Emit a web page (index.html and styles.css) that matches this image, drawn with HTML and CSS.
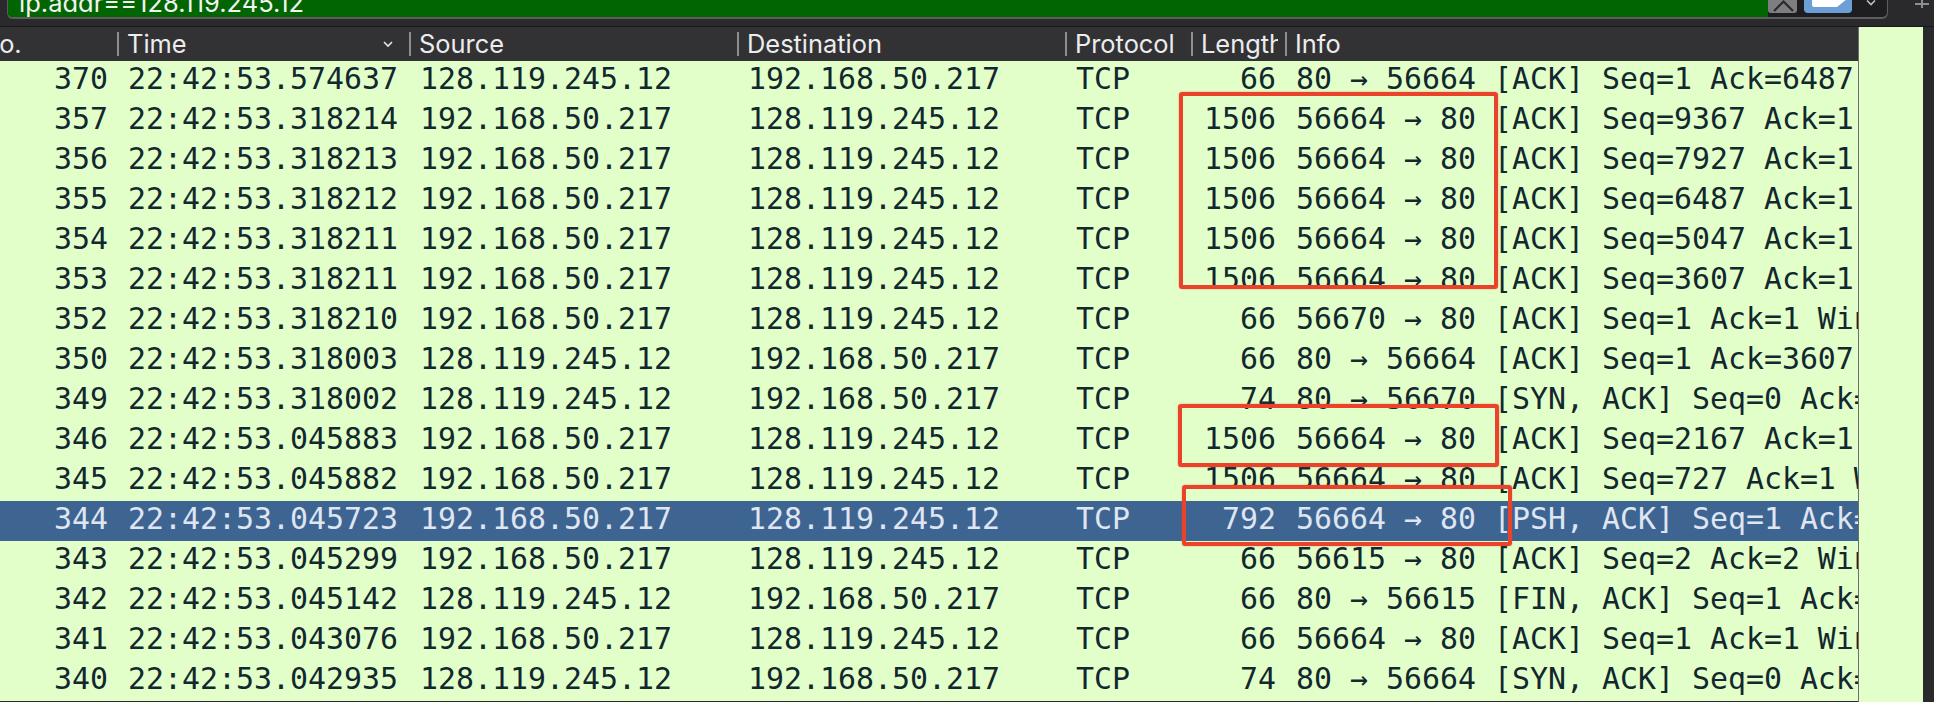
FILE: index.html
```html
<!DOCTYPE html>
<html lang="en">
<head>
<meta charset="utf-8">
<title>Wireshark packet list</title>
<link rel="stylesheet" href="styles.css">
</head>
<body>
<div class="app">
  <div class="toolbar">
    <div class="filter">
      <div class="filter-field"><span class="filter-text">ip.addr==128.119.245.12</span></div>
      <div class="btn-clear"><svg width="29" height="13" viewBox="0 0 29 13"><polyline points="6,11 15.5,1.5 25,11" fill="none" stroke="#2a2a2c" stroke-width="2.2"/></svg></div>
      <div class="btn-apply"><svg width="48" height="13" viewBox="0 0 48 13"><path d="M8 0 L8 5 Q8 7 10 7 L33 7 L43 -1 Z" fill="#ffffff"/></svg></div>
      <div class="dropdown"><svg width="10" height="7" viewBox="0 0 10 7"><polyline points="1,0.5 5,4.5 9,0.5" fill="none" stroke="#bdbdbf" stroke-width="1.6"/></svg></div>
    </div>
    <div class="plus"><svg width="14" height="9" viewBox="0 0 14 9"><path d="M7 0 V8 M0 4 H14" stroke="#8e8e90" stroke-width="2"/></svg></div>
  </div>
  <div class="main">
    <div class="packets">
      <div class="head">
        <div class="hc hc-no">No.</div>
        <div class="hc hc-time"><span>Time</span><svg width="10" height="7" viewBox="0 0 10 7"><polyline points="1,1 5,5 9,1" fill="none" stroke="#e6e6e6" stroke-width="1.6"/></svg></div>
        <div class="hc">Source</div>
        <div class="hc">Destination</div>
        <div class="hc">Protocol</div>
        <div class="hc hc-len">Length</div>
        <div class="hc">Info</div>
      </div>
      <div class="rows">
        <div class="row"><div class="c r">370</div><div class="c">22:42:53.574637</div><div class="c">128.119.245.12</div><div class="c">192.168.50.217</div><div class="c">TCP</div><div class="c r">66</div><div class="c">80 → 56664 [ACK] Seq=1 Ack=6487 Win=131072 Len=0</div></div>
        <div class="row"><div class="c r">357</div><div class="c">22:42:53.318214</div><div class="c">192.168.50.217</div><div class="c">128.119.245.12</div><div class="c">TCP</div><div class="c r">1506</div><div class="c">56664 → 80 [ACK] Seq=9367 Ack=1 Win=131712 Len=1440</div></div>
        <div class="row"><div class="c r">356</div><div class="c">22:42:53.318213</div><div class="c">192.168.50.217</div><div class="c">128.119.245.12</div><div class="c">TCP</div><div class="c r">1506</div><div class="c">56664 → 80 [ACK] Seq=7927 Ack=1 Win=131712 Len=1440</div></div>
        <div class="row"><div class="c r">355</div><div class="c">22:42:53.318212</div><div class="c">192.168.50.217</div><div class="c">128.119.245.12</div><div class="c">TCP</div><div class="c r">1506</div><div class="c">56664 → 80 [ACK] Seq=6487 Ack=1 Win=131712 Len=1440</div></div>
        <div class="row"><div class="c r">354</div><div class="c">22:42:53.318211</div><div class="c">192.168.50.217</div><div class="c">128.119.245.12</div><div class="c">TCP</div><div class="c r">1506</div><div class="c">56664 → 80 [ACK] Seq=5047 Ack=1 Win=131712 Len=1440</div></div>
        <div class="row"><div class="c r">353</div><div class="c">22:42:53.318211</div><div class="c">192.168.50.217</div><div class="c">128.119.245.12</div><div class="c">TCP</div><div class="c r">1506</div><div class="c">56664 → 80 [ACK] Seq=3607 Ack=1 Win=131712 Len=1440</div></div>
        <div class="row"><div class="c r">352</div><div class="c">22:42:53.318210</div><div class="c">192.168.50.217</div><div class="c">128.119.245.12</div><div class="c">TCP</div><div class="c r">66</div><div class="c">56670 → 80 [ACK] Seq=1 Ack=1 Win=131712 Len=0</div></div>
        <div class="row"><div class="c r">350</div><div class="c">22:42:53.318003</div><div class="c">128.119.245.12</div><div class="c">192.168.50.217</div><div class="c">TCP</div><div class="c r">66</div><div class="c">80 → 56664 [ACK] Seq=1 Ack=3607 Win=131072 Len=0</div></div>
        <div class="row"><div class="c r">349</div><div class="c">22:42:53.318002</div><div class="c">128.119.245.12</div><div class="c">192.168.50.217</div><div class="c">TCP</div><div class="c r">74</div><div class="c">80 → 56670 [SYN, ACK] Seq=0 Ack=1 Win=65535 Len=0</div></div>
        <div class="row"><div class="c r">346</div><div class="c">22:42:53.045883</div><div class="c">192.168.50.217</div><div class="c">128.119.245.12</div><div class="c">TCP</div><div class="c r">1506</div><div class="c">56664 → 80 [ACK] Seq=2167 Ack=1 Win=131712 Len=1440</div></div>
        <div class="row"><div class="c r">345</div><div class="c">22:42:53.045882</div><div class="c">192.168.50.217</div><div class="c">128.119.245.12</div><div class="c">TCP</div><div class="c r">1506</div><div class="c">56664 → 80 [ACK] Seq=727 Ack=1 Win=131712 Len=1440</div></div>
        <div class="row sel"><div class="c r">344</div><div class="c">22:42:53.045723</div><div class="c">192.168.50.217</div><div class="c">128.119.245.12</div><div class="c">TCP</div><div class="c r">792</div><div class="c">56664 → 80 [PSH, ACK] Seq=1 Ack=1 Win=131712 Len=726</div></div>
        <div class="row"><div class="c r">343</div><div class="c">22:42:53.045299</div><div class="c">192.168.50.217</div><div class="c">128.119.245.12</div><div class="c">TCP</div><div class="c r">66</div><div class="c">56615 → 80 [ACK] Seq=2 Ack=2 Win=131712 Len=0</div></div>
        <div class="row"><div class="c r">342</div><div class="c">22:42:53.045142</div><div class="c">128.119.245.12</div><div class="c">192.168.50.217</div><div class="c">TCP</div><div class="c r">66</div><div class="c">80 → 56615 [FIN, ACK] Seq=1 Ack=2 Win=131072 Len=0</div></div>
        <div class="row"><div class="c r">341</div><div class="c">22:42:53.043076</div><div class="c">192.168.50.217</div><div class="c">128.119.245.12</div><div class="c">TCP</div><div class="c r">66</div><div class="c">56664 → 80 [ACK] Seq=1 Ack=1 Win=131712 Len=0</div></div>
        <div class="row"><div class="c r">340</div><div class="c">22:42:53.042935</div><div class="c">128.119.245.12</div><div class="c">192.168.50.217</div><div class="c">TCP</div><div class="c r">74</div><div class="c">80 → 56664 [SYN, ACK] Seq=0 Ack=1 Win=65535 Len=0</div></div>
      </div>
    </div>
    <div class="minimap"></div>
    <div class="edge"></div>
  </div>
  <div class="mark m1"></div>
  <div class="mark m2"></div>
  <div class="mark m3"></div>
</div>
</body>
</html>
```

FILE: styles.css
```css
* { box-sizing: border-box; margin: 0; padding: 0; }
html, body { width: 1934px; height: 702px; overflow: hidden; background: #2a2a2c; }
.app { position: relative; width: 1934px; height: 702px; display: flex; flex-direction: column; }

.toolbar { height: 27px; flex: none; display: flex; align-items: flex-start; background: #2a2a2c; border-bottom: 1px solid #19191a; }
.filter { margin-left: 7px; width: 1881px; height: 19px; display: flex; align-items: flex-start; background: #1e1e20; border-left: 1px solid #5d5d60; border-right: 1px solid #5d5d60; border-bottom: 2px solid #5d5d60; border-radius: 0 0 6px 6px; overflow: hidden; }
.filter-field { width: 1760px; height: 17px; background: #016501; overflow: hidden; padding-left: 11px; }
.filter-text { display: block; margin-top: -6px; line-height: 17px; font-family: Inter, "Liberation Sans", sans-serif; font-size: 25.5px; color: #f2f2f2; white-space: nowrap; }
.btn-clear { width: 29px; height: 13px; background: #7e7e80; border-radius: 0 0 3px 3px; }
.btn-clear svg, .btn-apply svg, .dropdown svg, .plus svg { display: block; }
.btn-apply { margin-left: 7px; width: 48px; height: 13px; background: #6c9fd7; border-radius: 0 0 4px 4px; }
.dropdown { flex: 1; display: flex; justify-content: center; padding-left: 2px; }
.plus { margin-left: 27px; }

.main { flex: 1; display: flex; min-height: 0; }
.packets { width: 1858px; flex: none; overflow: hidden; }
.head, .row { display: grid; grid-template-columns: 117px 292px 328px 328px 126px 94px 573px; }
.head { height: 34px; background: #323234; color: #ececee; font-family: Inter, "Liberation Sans", sans-serif; font-size: 25.4px; line-height: 34px; }
.hc { padding-left: 10px; white-space: nowrap; overflow: hidden; background: linear-gradient(#8f8f92, #8f8f92) 0 50% / 2px 24px no-repeat; }
.hc-no { padding-left: 0; text-indent: -20px; background: none; }
.hc-time { display: flex; align-items: center; justify-content: space-between; padding-right: 16px; }
.hc-len { clip-path: inset(0 7px 0 0); }

.row { height: 40px; background: #e2ffc9; color: #12272e; font-family: "DejaVu Sans Mono", monospace; font-size: 29.9px; line-height: 36px; }
.row.sel { background: #3e6491; color: #dfe5f1; }
.c { padding-left: 11px; white-space: nowrap; overflow: hidden; }
.c.r { padding-left: 0; padding-right: 9px; text-align: right; }

.minimap { width: 65px; flex: none; background: #e2ffc9; border-left: 1px solid #6e6e70; }
.edge { flex: 1; background: #2a2a2c; }

.mark { position: absolute; border: 4px solid #e9432b; border-radius: 3px; box-shadow: 0 0 2px rgba(233, 67, 43, 0.55); }
.m1 { left: 1179px; top: 92px; width: 319px; height: 197px; }
.m2 { left: 1178px; top: 404px; width: 321px; height: 63px; }
.m3 { left: 1182px; top: 485px; width: 330px; height: 61px; }
```
